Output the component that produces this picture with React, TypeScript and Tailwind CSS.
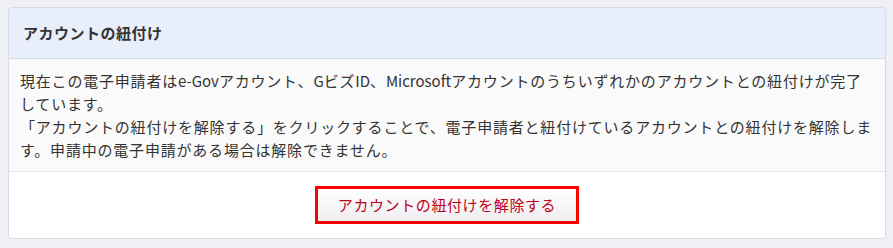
export default function App() {
  return (
    <div
      className="min-h-[248px] w-[893px] bg-[#eef0f5] pt-[7px] pl-[8px] pr-[7px] pb-[6px]"
      style={{ fontFamily: '"Noto Sans CJK JP", "Noto Sans", sans-serif' }}
    >
      <div className="overflow-hidden rounded-[4px] border border-[#d9dbe0] bg-white">
        <div className="flex h-[51px] items-center border-b border-[#d5d9e0] bg-[#e9effa] px-[14px]">
          <h2 className="text-[15px] font-bold tracking-[0.5px] text-[#333]">アカウントの紐付け</h2>
        </div>
        <div className="border-b border-[#e6e6e6] bg-[#fafafa] px-[11px] pt-[10px] pb-[10px] text-[15px] leading-[23px] tracking-[0.8px] text-[#333]">
          <p>
            現在この電子申請者は<span className="tracking-normal">e-Gov</span>アカウント、<span className="tracking-normal">G</span>ビズ<span className="tracking-normal">ID</span>、<span className="tracking-normal">Microsoft</span>アカウントのうちいずれかのアカウントとの紐付けが完了しています。
          </p>
          <p>
            「アカウントの紐付けを解除する」をクリックすることで、電子申請者と紐付けているアカウントとの紐付けを解除します。申請中の電子申請がある場合は解除できません。
          </p>
        </div>
        <div className="flex h-[66px] items-center justify-center">
          <button className="flex h-[38px] w-[264px] items-center justify-center border-[3px] border-[#ff0000] bg-gradient-to-b from-white to-[#eeeef0] text-[15px] tracking-[0.6px] text-[#c00018]">
            アカウントの紐付けを解除する
          </button>
        </div>
      </div>
    </div>
  );
}
